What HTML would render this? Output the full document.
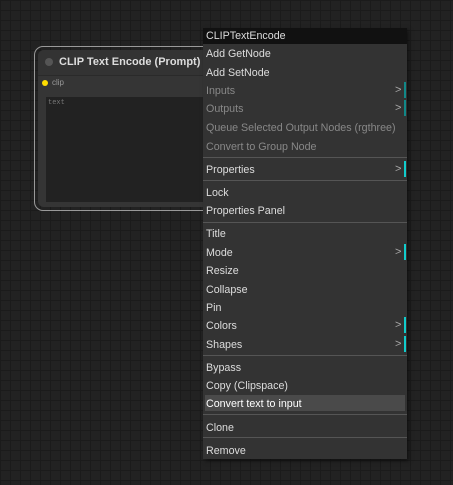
<!DOCTYPE html>
<html><head><style>
body{margin:0;width:453px;height:485px;overflow:hidden;background-color:#222;
background-image:linear-gradient(#1b1b1b 1px,transparent 1px),linear-gradient(90deg,#1b1b1b 1px,transparent 1px);
background-size:10px 10px;font-family:"Liberation Sans",sans-serif;position:relative}
.outline{position:absolute;left:34px;top:46px;width:180px;height:165px;border:1.5px solid #999;border-radius:9px;box-sizing:border-box}
.node{position:absolute;left:38px;top:50px;width:172px;height:157px;background:#353535;border-radius:6px}
.tb{position:absolute;left:0;top:0;width:100%;height:25px;background:#333;border-bottom:1px solid #2a2a2a;border-radius:6px 6px 0 0}
.ta{position:absolute;left:8px;top:47px;width:164px;height:105px;background:#222}
.menu{position:absolute;left:203px;top:28px;width:204px;height:431px;background:#333;box-shadow:2px 2px 4px rgba(0,0,0,.5)}
.it{position:absolute;left:3px;font-size:10.7px;color:#ddd;white-space:nowrap;line-height:16px;margin-top:1px}
.d{color:#888}
.sep{position:absolute;left:0;width:204px;height:1px;background:#555}
.arr{position:absolute;left:192px;font-size:11px;color:#aaa;line-height:16px}
.cy{position:absolute;left:201px;width:2px;height:16px;background:#1cc}
</style></head><body>
<div class="outline"></div>
<div class="node">
<div class="tb"></div>
<div style="position:absolute;left:7px;top:8px;width:8px;height:8px;border-radius:50%;background:#555"></div>
<div style="position:absolute;left:21px;top:6px;font-size:11px;font-weight:bold;color:#ddd">CLIP Text Encode (Prompt)</div>
<div style="position:absolute;left:4px;top:30px;width:6px;height:6px;border-radius:50%;background:#fd0"></div>
<div style="position:absolute;left:14px;top:28px;font-size:8px;color:#999">clip</div>
<div class="ta"><div style="position:absolute;left:2px;top:2px;font-family:'Liberation Mono',monospace;font-size:7px;color:#777">text</div></div>
</div>
<div class="menu">
<div style="position:absolute;left:0;top:0;width:204px;height:16px;background:#111"></div>
<div class="it" style="top:0;margin-top:0">CLIPTextEncode</div>
<div class="it" style="top:17px">Add GetNode</div>
<div class="it" style="top:36px">Add SetNode</div>
<div class="it d" style="top:54px">Inputs</div><div class="arr" style="top:54px">&gt;</div><div class="cy" style="top:54px;background:#188"></div>
<div class="it d" style="top:72px">Outputs</div><div class="arr" style="top:72px">&gt;</div><div class="cy" style="top:72px;background:#188"></div>
<div class="it d" style="top:91px">Queue Selected Output Nodes (rgthree)</div>
<div class="it d" style="top:110px">Convert to Group Node</div>
<div class="sep" style="top:129px"></div>
<div class="it" style="top:133px">Properties</div><div class="arr" style="top:133px">&gt;</div><div class="cy" style="top:133px"></div>
<div class="sep" style="top:152px"></div>
<div class="it" style="top:156px">Lock</div>
<div class="it" style="top:174px">Properties Panel</div>
<div class="sep" style="top:194px"></div>
<div class="it" style="top:197px">Title</div>
<div class="it" style="top:216px">Mode</div><div class="arr" style="top:216px">&gt;</div><div class="cy" style="top:216px"></div>
<div class="it" style="top:234px">Resize</div>
<div class="it" style="top:253px">Collapse</div>
<div class="it" style="top:271px">Pin</div>
<div class="it" style="top:289px">Colors</div><div class="arr" style="top:289px">&gt;</div><div class="cy" style="top:289px"></div>
<div class="it" style="top:308px">Shapes</div><div class="arr" style="top:308px">&gt;</div><div class="cy" style="top:308px"></div>
<div class="sep" style="top:327px"></div>
<div class="it" style="top:331px">Bypass</div>
<div class="it" style="top:349px">Copy (Clipspace)</div>
<div style="position:absolute;left:2px;top:367px;width:200px;height:16px;background:#4a4a4a"></div>
<div class="it" style="top:367px;color:#fff">Convert text to input</div>
<div class="sep" style="top:386px"></div>
<div class="it" style="top:391px">Clone</div>
<div class="sep" style="top:409px"></div>
<div class="it" style="top:414px">Remove</div>
</div>
</body></html>
